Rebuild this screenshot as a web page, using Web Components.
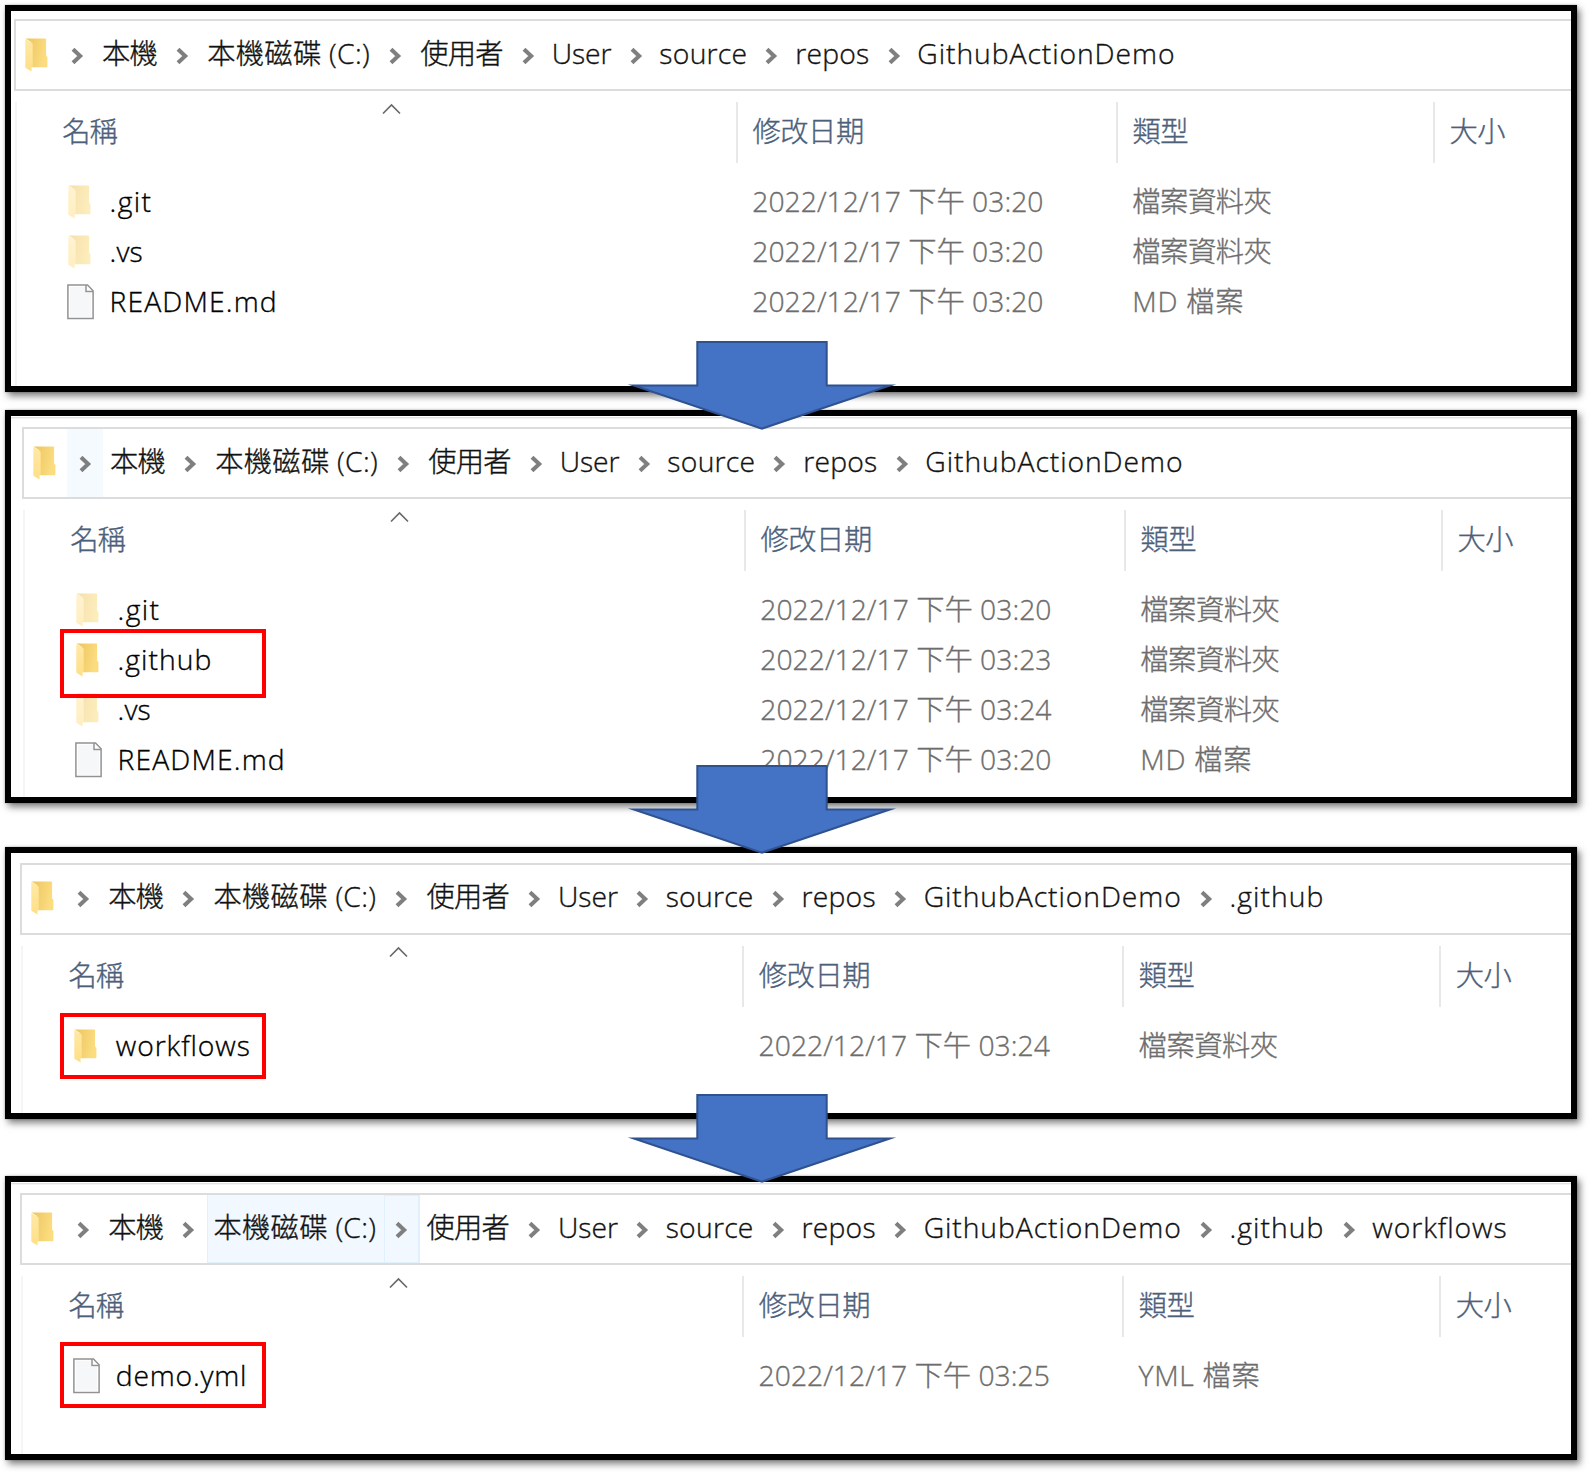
<!DOCTYPE html>
<html lang="zh-Hant">
<head>
<meta charset="utf-8">
<title>GithubActionDemo</title>
<style>
  body { margin: 0; background: #fff; font-family: "Open Sans", "Noto Sans CJK TC", sans-serif; }
</style>
</head>
<body>
<folder-steps></folder-steps>

<script>
const FONT = `font: 300 28.3px/40px "Open Sans", "Noto Sans CJK TC", sans-serif;-webkit-text-stroke:.35px currentColor;`;
let gid = 0;

class UiBase extends HTMLElement {
  paint(html) {
    if (!this.shadowRoot) this.attachShadow({ mode: 'open' });
    this.shadowRoot.innerHTML = html;
  }
}

/* Text run; an optional width spreads the letters to that advance. */
class FitText extends UiBase {
  connectedCallback() {
    this.paint(`<style>:host{display:block;white-space:pre}span{display:inline-block}</style><span><slot></slot></span>`);
    const w = parseFloat(this.getAttribute('w'));
    if (!w) return;
    const span = this.shadowRoot.querySelector('span');
    const n = this.textContent.length;
    span.style.letterSpacing = ((w - span.getBoundingClientRect().width) / n).toFixed(3) + 'px';
  }
}
customElements.define('fit-text', FitText);

class FolderIcon extends UiBase {
  connectedCallback() {
    const a = 'f' + (++gid), b = 'g' + gid;
    this.paint(`<style>:host{display:block;width:23px;height:34px}:host([faded]){opacity:.52}svg{display:block}</style>
    <svg width="23" height="34" viewBox="0 0 23 34">
      <defs>
        <linearGradient id="${a}" x1="0" y1="0" x2="1" y2="0.25"><stop offset="0" stop-color="#eec45a"/><stop offset=".45" stop-color="#f3cf6e"/><stop offset="1" stop-color="#fbdd80"/></linearGradient>
        <linearGradient id="${b}" x1="0" y1="0" x2="0" y2="1"><stop offset="0" stop-color="#ffe9a6"/><stop offset="1" stop-color="#ffdf87"/></linearGradient>
      </defs>
      <path d="M.6.5H20.3a.8.8 0 0 1 .8.8V17.5l1.3 1.6V28.4a.8.8 0 0 1-.8.8H6V4z" fill="url(#${a})"/>
      <path d="M.3 1 6.4 4.6a2.400 2.400 0 0 1 1.300 2V28.600L6.600 29.200V33.600L1.100 30.200a1.400 1.400 0 0 1-.8-1.200z" fill="url(#${b})"/>
    </svg>`);
  }
}
customElements.define('folder-icon', FolderIcon);

class FileIcon extends UiBase {
  connectedCallback() {
    this.paint(`<style>:host{display:block;width:27px;height:36px}svg{display:block}</style>
    <svg width="27" height="36" viewBox="0 0 27 36">
      <path d="M.9.9H20.500L26.100 6.800V34.600H.9z" fill="#fff" stroke="#929292" stroke-width="1.500"/>
      <path d="M2.800 2.800H18V9H24.200V32.800H2.800z" fill="#f5f7f8"/>
      <path d="M19 1V7.600H26" fill="none" stroke="#929292" stroke-width="1.500"/>
    </svg>`);
  }
}
customElements.define('file-icon', FileIcon);

class CrumbArrow extends UiBase {
  connectedCallback() {
    this.paint(`<style>:host{display:flex;box-sizing:border-box;width:36px;height:68px;align-items:center;justify-content:center}
      :host([hot=soft]){background:#f5faff}
      :host([hot=on]){background:#f1f8ff;border:1px solid #e0f0fd;border-right-width:2px}
      svg{display:block;margin-top:1px}</style>
    <svg width="13" height="18" viewBox="0 0 13 18"><path d="M2 2.200 9.200 9 2 15.800" fill="none" stroke="#7f7f7f" stroke-width="4"/></svg>`);
  }
}
customElements.define('crumb-arrow', CrumbArrow);

class CrumbPart extends UiBase {
  connectedCallback() {
    const w = +this.getAttribute('w');
    const latin = /^[\x00-\x7f]+$/.test(this.getAttribute('label'));
    this.paint(`<style>:host{display:flex;box-sizing:border-box;width:${w}px;height:68px;align-items:center;padding-left:${latin ? 5.3 : 6.8}px;color:#111;${FONT}}
      :host([hot]){background:#f1f8ff;box-shadow:inset 1px 0 #e0f0fd,inset 0 -1px #e0f0fd}
      fit-text{margin-top:-5px}</style>
    <fit-text w="${w - (latin ? 11.8 : 14.3)}">${this.getAttribute('label')}</fit-text>`);
  }
}
customElements.define('crumb-part', CrumbPart);

const CRUMBS = [['本機', 69.2], ['本機磁碟 (C:)', 177], ['使用者', 97], ['User', 71.7], ['source', 99.8],
  ['repos', 86.2], ['GithubActionDemo', 269.9], ['.github', 106.8], ['workflows', 147]];

class AddressBar extends UiBase {
  connectedCallback() {
    const depth = +this.getAttribute('depth'), hot = this.getAttribute('hot');
    const parts = CRUMBS.slice(0, depth).map(([t, w], i) => {
      const before = hot === 'root' && i === 0 ? 'hot="soft"' : hot === 'disk' && i === 2 ? 'hot="on"' : '';
      return `<crumb-arrow ${before}></crumb-arrow><crumb-part label="${t}" w="${w}" ${hot === 'disk' && i === 1 ? 'hot' : ''}></crumb-part>`;
    }).join('');
    this.paint(`<style>:host{display:flex;box-sizing:border-box;height:72px;border:2px solid #dcdcdc;border-right:0;align-items:center;padding-left:9px}
      folder-icon{flex:none;margin:-1px 11.200px 0 0}crumb-arrow,crumb-part{flex:none}</style>
    <folder-icon></folder-icon>${parts}`);
  }
}
customElements.define('address-bar', AddressBar);

const GRID = 'display:grid;grid-template-columns:722px 380px 317px 1fr;';

class ListHeader extends UiBase {
  connectedCallback() {
    this.paint(`<style>:host{${GRID}height:61px;color:#4c607a;${FONT}}
      div{box-sizing:border-box;border-left:2px solid #e8e8e8;padding:9px 0 0 14.500px}
      .name{border:0;padding:9px 0 0 48.300px;display:flex}
      svg{margin:-8.500px 0 0 265.500px}</style>
    <div class="name"><fit-text w="54.500">名稱</fit-text><svg width="19" height="12" viewBox="0 0 19 12"><path d="M1 10.500 9.500 2 18 10.500" fill="none" stroke="#6a6a6a" stroke-width="1.700"/></svg></div>
    <div><fit-text w="111.200">修改日期</fit-text></div><div><fit-text w="55.500">類型</fit-text></div><div><fit-text w="55.500">大小</fit-text></div>`);
  }
}
customElements.define('list-header', ListHeader);

class FileRow extends UiBase {
  connectedCallback() {
    const g = k => this.getAttribute(k);
    const icon = g('kind') === 'file' ? '<file-icon></file-icon>' : `<folder-icon ${g('kind') === 'hidden' ? 'faded' : ''}></folder-icon>`;
    this.paint(`<style>:host{${GRID}height:50px;align-items:center;color:#6d6d6d;${FONT}}
      .name{display:flex;align-items:center;color:#000;padding-left:53px}
      .icon{width:27px;display:flex;justify-content:center;margin-right:15.500px}
      .icon folder-icon{margin-left:-2px}
      .cell{padding-left:16.300px}fit-text{margin-top:-2px}</style>
    <div class="name"><div class="icon">${icon}</div><fit-text w="${g('nw')}">${g('name')}</fit-text></div>
    <div class="cell"><fit-text w="291.200">2022/12/17 下午 ${g('time')}</fit-text></div>
    <div class="cell"><fit-text w="${g('tw')}">${g('type')}</fit-text></div><div></div>`);
  }
}
customElements.define('file-row', FileRow);

class ExplorerPanel extends UiBase {
  connectedCallback() {
    const g = k => this.getAttribute(k);
    this.paint(`<style>
      :host{display:flex;flex-direction:column;box-sizing:border-box;width:1572px;height:${g('h')}px;border:6px solid #000;background:#fff;
        padding:${g('y')}px 0 0 ${g('x')}px;box-shadow:0 0 2px rgba(0,0,0,.3),3px 4px 7px rgba(0,0,0,.5)}
      :host([edge]){background:linear-gradient(#fff 1px,#dfe1e3 1px 2px,#f4f4f4 2px 3px,#fff 3px)}
      .list{flex:1;margin-top:11px;background:linear-gradient(90deg,transparent 1px,#f5f5f5 1px 3px,transparent 3px)}
      .rows{margin-top:14px}</style>
    <address-bar depth="${g('depth')}" hot="${g('hot') || ''}"></address-bar>
    <div class="list"><list-header></list-header><div class="rows"><slot></slot></div></div>`);
  }
}
customElements.define('explorer-panel', ExplorerPanel);

class DownArrow extends UiBase {
  connectedCallback() {
    this.paint(`<style>:host{position:absolute;left:625px;top:${this.getAttribute('top')}px;width:272px;height:92px}svg{display:block}</style>
    <svg width="272" height="92" viewBox="0 0 272 92"><path d="M72.300 2H201.700V45.500H265L136.900 88.700 8.800 45.500H72.300z" fill="#4472c4" stroke="#2f528f" stroke-width="2" stroke-miterlimit="8"/></svg>`);
  }
}
customElements.define('down-arrow', DownArrow);

class RedFrame extends UiBase {
  connectedCallback() {
    this.paint(`<style>:host{position:absolute;box-sizing:border-box;left:60px;width:206px;top:${this.getAttribute('top')}px;height:${this.getAttribute('h')}px;border:4px solid #f00}</style>`);
  }
}
customElements.define('red-frame', RedFrame);

class FolderSteps extends UiBase {
  connectedCallback() {
    const row = (kind, name, nw, time, type = '檔案資料夾', tw = 139) =>
      `<file-row kind="${kind}" name="${name}" nw="${nw}" time="${time}" type="${type}" tw="${tw}"></file-row>`;
    this.paint(`<style>:host{display:flex;flex-direction:column;position:relative;box-sizing:border-box;width:1590px;height:1473px;padding:5px 0 0 5px;overflow:hidden}
      explorer-panel{flex:none}.b{margin-top:18px}.c{margin-top:44px}.d{margin-top:57px}</style>
    <explorer-panel h="387" x="3" y="8" depth="7">
      ${row('hidden', '.git', 43, '03:20')}${row('hidden', '.vs', 33.5, '03:20')}${row('file', 'README.md', 168.3, '03:20', 'MD 檔案', 112)}
    </explorer-panel>
    <explorer-panel class="b" h="393" x="11" y="11" depth="7" hot="root" edge>
      ${row('hidden', '.git', 43, '03:20')}${row('folder', '.github', 95, '03:23')}${row('hidden', '.vs', 33.5, '03:24')}${row('file', 'README.md', 168.3, '03:20', 'MD 檔案', 112)}
    </explorer-panel>
    <explorer-panel class="c" h="272" x="9.3" y="9.5" depth="8">${row('folder', 'workflows', 135, '03:24')}</explorer-panel>
    <explorer-panel class="d" h="284" x="9.3" y="11" depth="9" hot="disk" edge>${row('file', 'demo.yml', 131.5, '03:25', 'YML 檔案', 122)}</explorer-panel>
    <red-frame top="629" h="69"></red-frame><red-frame top="1013" h="66"></red-frame><red-frame top="1342" h="66"></red-frame>
    <down-arrow top="340"></down-arrow><down-arrow top="764"></down-arrow><down-arrow top="1093"></down-arrow>`);
  }
}
customElements.define('folder-steps', FolderSteps);
</script>
</body>
</html>
